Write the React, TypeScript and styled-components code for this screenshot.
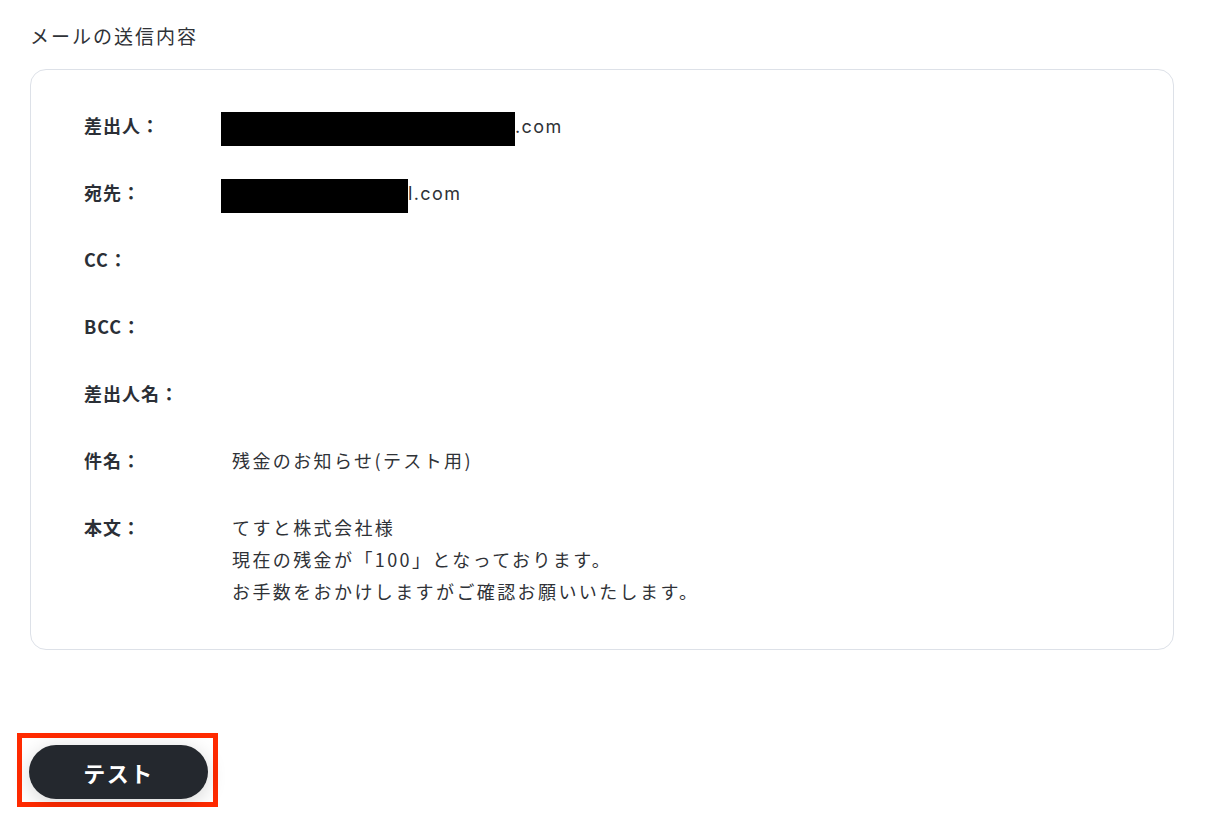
import styled, { createGlobalStyle } from "styled-components";

const GlobalStyle = createGlobalStyle`
	html, body {
		margin: 0;
		padding: 0;
		background: #ffffff;
	}
	body {
		font-family: "Noto Sans CJK JP", "Noto Sans", sans-serif;
		color: #2b2f36;
	}
`;

const Page = styled.div`
	padding: 22px 52px 0 30px;
`;

const Heading = styled.h2`
	margin: 0 0 19px;
	font-size: 19px;
	line-height: 28px;
	font-weight: 400;
	letter-spacing: 2px;
	color: #2f3237;
`;

const Card = styled.section`
	border: 1px solid #dde1e8;
	border-radius: 16px;
	padding: 39px 54px 42px 53px;
	display: flex;
	flex-direction: column;
	gap: 35px;
`;

const Row = styled.div`
	display: grid;
	grid-template-columns: 148px 1fr;
	align-items: start;
	min-height: 32px;
`;

const Label = styled.div`
	font-size: 18px;
	line-height: 32px;
	font-weight: 700;
	letter-spacing: 1px;
	color: #2b2f36;
`;

const Value = styled.div`
	font-size: 18px;
	line-height: 32px;
	font-weight: 400;
	letter-spacing: 2.4px;
	color: #2f3237;
	white-space: pre-line;
`;

const Redacted = styled.span<{ $w: number }>`
	display: inline-block;
	vertical-align: top;
	width: ${(p) => p.$w}px;
	height: 34px;
	margin: 3px 0 -7px -11px;
	background: #000;
`;

const Mail = styled.span`
	font-family: "Inter", "Noto Sans", sans-serif;
	font-size: 18px;
	line-height: 1;
	letter-spacing: 1.4px;
`;

const ActionArea = styled.div`
	margin: 83px 0 0 -13px;
`;

const Highlight = styled.div`
	display: inline-block;
	border: 5px solid #ff2a00;
	padding: 7px 5px 3px 7px;
`;

const TestButton = styled.button`
	display: block;
	width: 179px;
	height: 54px;
	border: none;
	border-radius: 27px;
	background: #24282e;
	color: #ffffff;
	font-family: "Noto Sans CJK JP", "Noto Sans", sans-serif;
	font-size: 22px;
	font-weight: 700;
	letter-spacing: 1.5px;
	box-shadow: 0 4px 20px rgba(0, 0, 0, 0.16);
	cursor: pointer;
`;

const fields: { label: string; value?: string }[] = [
	{ label: "CC：" },
	{ label: "BCC：" },
	{ label: "差出人名：" },
	{ label: "件名：", value: "残金のお知らせ(テスト用)" },
	{
		label: "本文：",
		value:
			"てすと株式会社様\n現在の残金が「100」となっております。\nお手数をおかけしますがご確認お願いいたします。",
	},
];

export default function App() {
	return (
		<Page>
			<GlobalStyle />
			<Heading>メールの送信内容</Heading>
			<Card>
				<Row>
					<Label>差出人：</Label>
					<Value>
						<Redacted $w={294} />
						<Mail>.com</Mail>
					</Value>
				</Row>
				<Row>
					<Label>宛先：</Label>
					<Value>
						<Redacted $w={187} />
						<Mail>l.com</Mail>
					</Value>
				</Row>
				{fields.map((f) => (
					<Row key={f.label}>
						<Label>{f.label}</Label>
						<Value>{f.value ?? ""}</Value>
					</Row>
				))}
			</Card>
			<ActionArea>
				<Highlight>
					<TestButton>テスト</TestButton>
				</Highlight>
			</ActionArea>
		</Page>
	);
}
